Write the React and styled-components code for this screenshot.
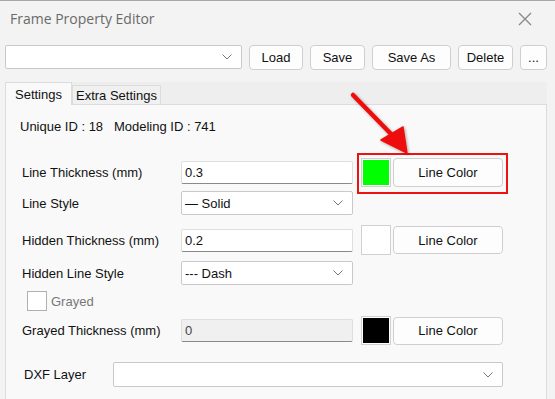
import React from 'react';
import styled, { createGlobalStyle } from 'styled-components';

const GlobalStyle = createGlobalStyle`
  html, body {
    margin: 0;
    padding: 0;
    background: #f3f3f3;
  }
  body {
    font-family: "Liberation Sans", Arial, sans-serif;
    font-size: 13px;
    color: #111;
  }
`;

const Window = styled.div`
  position: relative;
  width: 555px;
  height: 399px;
  box-sizing: border-box;
  border-top: 1px solid #a8a8a8;
  background: #f3f3f3;
  overflow: hidden;
`;

const TitleBar = styled.div`
  height: 35px;
  display: flex;
  align-items: center;
  justify-content: space-between;
  padding: 0 23px 0 10px;
`;

const Title = styled.div`
  font-family: "Open Sans", "Noto Sans", sans-serif;
  font-size: 14px;
  color: #6a6a6a;
`;

const Toolbar = styled.div`
  display: flex;
  align-items: center;
  gap: 7px;
  padding: 8px 0 0 5px;
  height: 26px;
`;

const Combo = styled.div`
  position: relative;
  box-sizing: border-box;
  width: ${({ $w }) => $w}px;
  height: ${({ $h }) => $h || 24}px;
  background: #fff;
  border: 1px solid #c9c9c9;
  border-radius: 2px;
  display: flex;
  align-items: center;
  padding-left: 3px;
  font-size: 13px;
  color: #111;
`;

const Chevron = styled.svg`
  position: absolute;
  right: 9px;
  top: 50%;
  margin-top: -3px;
`;

const Button = styled.button`
  box-sizing: border-box;
  height: ${({ $h }) => $h || 25}px;
  width: ${({ $w }) => $w}px;
  background: #fdfdfd;
  border: 1px solid #cfcfcf;
  border-radius: 4px;
  font-family: "Liberation Sans", Arial, sans-serif;
  font-size: 13px;
  color: #111;
  padding: 0;
  display: flex;
  align-items: center;
  justify-content: center;
`;

const TabStrip = styled.div`
  margin: 12px 8px 0 5px;
  height: 22px;
  background: #eeeeee;
  display: flex;
  align-items: flex-end;
  box-sizing: border-box;
`;

const Tab = styled.div`
  box-sizing: border-box;
  height: ${({ $active }) => ($active ? 23 : 19)}px;
  padding: 0 ${({ $active }) => ($active ? 9 : 3)}px;
  display: flex;
  align-items: center;
  font-size: 13px;
  color: #111;
  background: ${({ $active }) => ($active ? '#f9f9f9' : '#f0f0f0')};
  border: 1px solid #dcdcdc;
  border-bottom: none;
  margin-bottom: ${({ $active }) => ($active ? -1 : 0)}px;
  position: relative;
`;

const Panel = styled.div`
  margin: 0 8px 0 5px;
  height: 300px;
  box-sizing: border-box;
  background: #f9f9f9;
  border: 1px solid #dcdcdc;
  padding: 14px 0 0 16px;
`;

const InfoLine = styled.div`
  height: 16px;
  line-height: 16px;
  margin-left: -2px;
`;

const Row = styled.div`
  display: flex;
  align-items: center;
  height: ${({ $h }) => $h}px;
  margin-top: ${({ $mt }) => $mt}px;
`;

const Label = styled.div`
  width: ${({ $w }) => $w || 159}px;
  flex-shrink: 0;
  padding-left: ${({ $pl }) => $pl || 0}px;
  box-sizing: border-box;
`;

const TextInput = styled.div`
  box-sizing: border-box;
  width: 172px;
  height: 23px;
  background: ${({ $disabled }) => ($disabled ? '#f0f0f0' : '#fff')};
  border: 1px solid #dedede;
  border-bottom: 1px solid #8a8a8a;
  border-radius: 2px;
  padding: 0 3px;
  display: flex;
  align-items: center;
  color: ${({ $disabled }) => ($disabled ? '#444' : '#111')};
`;

const ColorGroup = styled.div`
  display: flex;
  align-items: center;
  gap: 2px;
  margin-left: 8px;
`;

const Swatch = styled.div`
  box-sizing: border-box;
  width: 30px;
  height: ${({ $h }) => $h || 29}px;
  background: ${({ $color }) => $color};
  border: 1px solid #d0d0d0;
  ${({ $inset }) => $inset && 'box-shadow: inset 0 0 0 1px #ffffff;'}
`;

const CheckRow = styled.div`
  display: flex;
  align-items: center;
  gap: 4px;
  height: 20px;
  margin-top: 6px;
  margin-left: 5px;
  color: #777;
`;

const CheckBox = styled.div`
  width: 20px;
  height: 20px;
  box-sizing: border-box;
  background: #fff;
  border: 1px solid #b0b0b0;
`;

const Highlight = styled.div`
  position: absolute;
  left: 357px;
  top: 152px;
  width: 151px;
  height: 41px;
  box-sizing: border-box;
  border: 2px solid #ee1111;
  pointer-events: none;
`;

const ArrowLayer = styled.svg`
  position: absolute;
  left: 0;
  top: 0;
  pointer-events: none;
`;

const ChevronIcon = () => (
  <Chevron width="10" height="6" viewBox="0 0 10 6">
    <path d="M0.5 0.5 L5 5 L9.5 0.5" fill="none" stroke="#777" strokeWidth="1" />
  </Chevron>
);

const Select = ({ width, height, children }) => (
  <Combo $w={width} $h={height}>
    {children}
    <ChevronIcon />
  </Combo>
);

const CloseIcon = () => (
  <svg width="14" height="14" viewBox="0 0 14 14">
    <path d="M1 1 L13 13 M13 1 L1 13" stroke="#8a8a8a" strokeWidth="1.4" />
  </svg>
);

const App = () => (
  <>
    <GlobalStyle />
    <Window>
      <TitleBar>
        <Title>Frame Property Editor</Title>
        <CloseIcon />
      </TitleBar>

      <Toolbar>
        <Select width={237} height={24} />
        <Button $w={54}>Load</Button>
        <Button $w={55}>Save</Button>
        <Button $w={79}>Save As</Button>
        <Button $w={55}>Delete</Button>
        <Button $w={27}>...</Button>
      </Toolbar>

      <TabStrip>
        <Tab $active>Settings</Tab>
        <Tab>Extra Settings</Tab>
      </TabStrip>

      <Panel>
        <InfoLine>Unique ID : 18&nbsp;&nbsp;&nbsp;Modeling ID : 741</InfoLine>

        <Row $h={29} $mt={23}>
          <Label>Line Thickness (mm)</Label>
          <TextInput>0.3</TextInput>
          <ColorGroup>
            <Swatch $color="#00ff00" $inset />
            <Button $w={110} $h={29}>Line Color</Button>
          </ColorGroup>
        </Row>

        <Row $h={24} $mt={4}>
          <Label>Line Style</Label>
          <Select width={172} height={24}>— Solid</Select>
        </Row>

        <Row $h={30} $mt={10}>
          <Label>Hidden Thickness (mm)</Label>
          <TextInput>0.2</TextInput>
          <ColorGroup>
            <Swatch $color="#ffffff" $h={30} />
            <Button $w={110} $h={28}>Line Color</Button>
          </ColorGroup>
        </Row>

        <Row $h={24} $mt={6}>
          <Label>Hidden Line Style</Label>
          <Select width={172} height={24}>--- Dash</Select>
        </Row>

        <CheckRow>
          <CheckBox />
          Grayed
        </CheckRow>

        <Row $h={29} $mt={5}>
          <Label>Grayed Thickness (mm)</Label>
          <TextInput $disabled>0</TextInput>
          <ColorGroup>
            <Swatch $color="#000000" $inset />
            <Button $w={110} $h={28}>Line Color</Button>
          </ColorGroup>
        </Row>

        <Row $h={25} $mt={17}>
          <Label $w={91} $pl={2}>DXF Layer</Label>
          <Select width={390} height={25} />
        </Row>
      </Panel>

      <Highlight />
      <ArrowLayer width="555" height="399" viewBox="0 0 555 399">
        <defs>
          <filter id="arrowShadow" x="-30%" y="-30%" width="160%" height="160%">
            <feDropShadow dx="1" dy="1" stdDeviation="1.5" floodColor="#000" floodOpacity="0.35" />
          </filter>
        </defs>
        <g filter="url(#arrowShadow)">
          <path d="M353 94 L392 134" stroke="#ee1111" strokeWidth="4.5" strokeLinecap="round" />
          <path d="M381 139 L403 126 L407 152 Z" fill="#ee1111" stroke="#ee1111" strokeWidth="1.5" strokeLinejoin="round" />
        </g>
      </ArrowLayer>
    </Window>
  </>
);

export default App;
